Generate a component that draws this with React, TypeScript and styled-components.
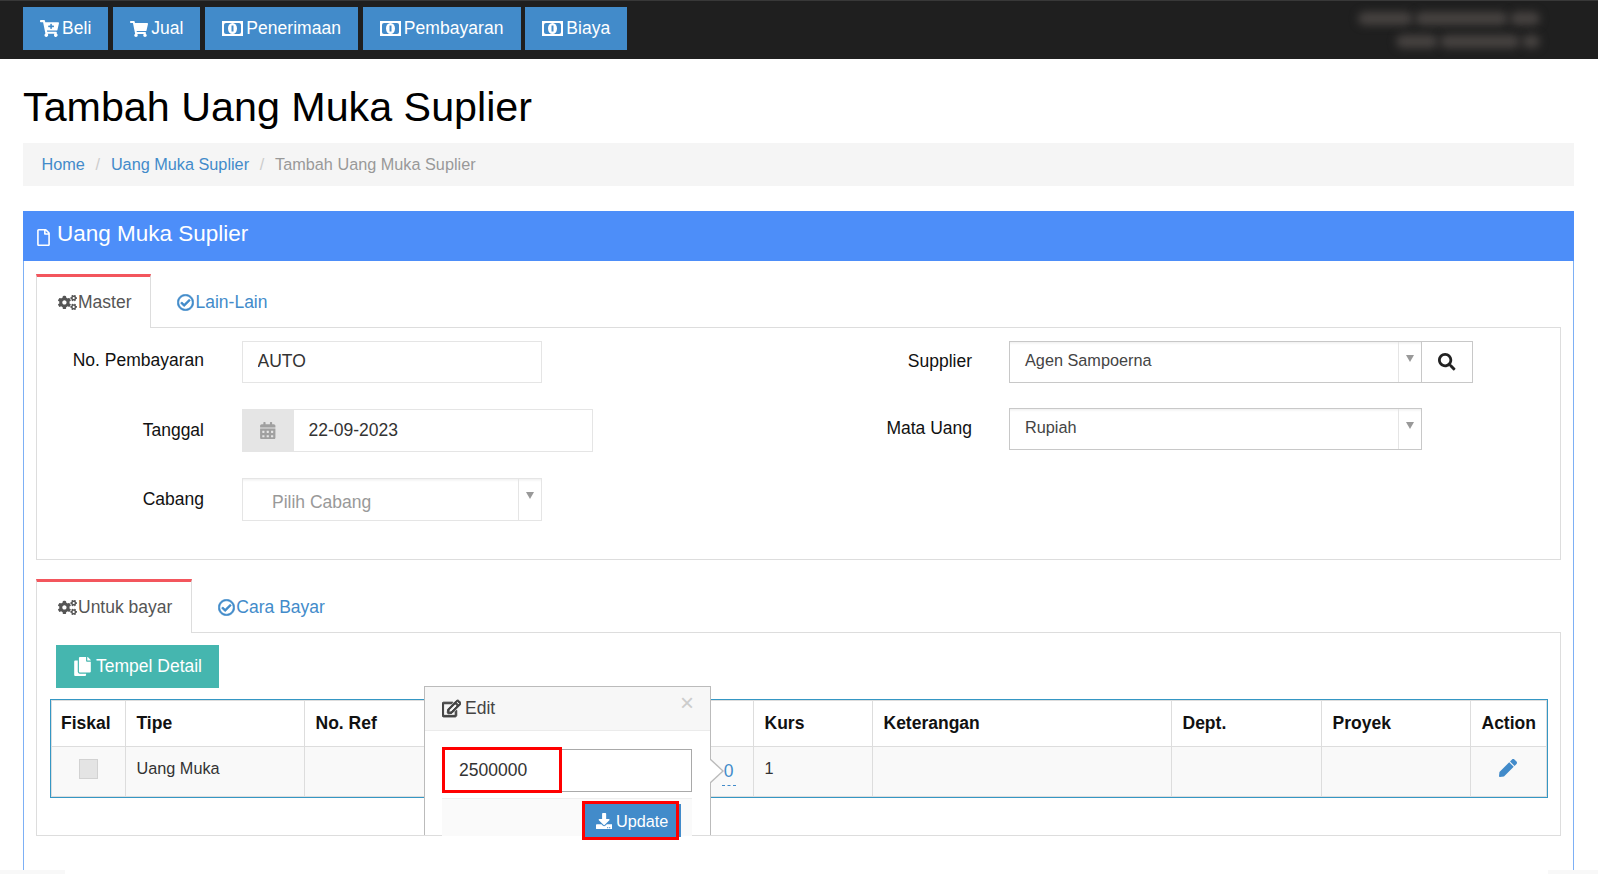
import React from 'react';
import styled, { createGlobalStyle } from 'styled-components';
import {
	FaCalendarAlt,
	FaCartPlus,
	FaCogs,
	FaCopy,
	FaDownload,
	FaPen,
	FaRegCheckCircle,
	FaRegEdit,
	FaRegFile,
	FaSearch,
	FaShoppingCart,
} from 'react-icons/fa';

const GlobalStyle = createGlobalStyle`
	html, body {
		margin: 0;
		height: 100%;
		overflow: hidden;
		background: #fff;
	}
	body {
		font-family: 'Liberation Sans', Arial, sans-serif;
		font-size: 17.5px;
		color: #333;
	}
	*, *::before, *::after {
		box-sizing: border-box;
	}
`;

const Topbar = styled.header`
	height: 59px;
	padding: 7px 58px 0 23px;
	background: #1f1f1f;
	border-top: 1px solid #383838;
	display: flex;
	justify-content: space-between;
`;

const NavGroup = styled.nav`
	display: flex;
	gap: 4.75px;
	margin-top: -1px;
`;

const NavButton = styled.button`
	height: 43px;
	padding: 0 17px;
	border: 0;
	background: #428bca;
	color: #fff;
	font: 17.5px 'Liberation Sans', Arial, sans-serif;
	letter-spacing: 0.05px;
	display: flex;
	align-items: center;
	gap: 3px;
	white-space: nowrap;
	svg {
		flex: none;
	}
`;

const UserBlur = styled.div`
	display: flex;
	flex-direction: column;
	align-items: flex-end;
	gap: 10px;
	padding-top: 4px;
`;

const BlurRow = styled.div`
	display: flex;
	gap: 2px;
`;

const BlurBit = styled.span<{ $w: number }>`
	display: block;
	width: ${(p) => p.$w}px;
	height: 13px;
	border-radius: 7px;
	background: #474341;
	filter: blur(4.5px);
`;

const Page = styled.main`
	padding: 0 24px 0 23px;
`;

const Title = styled.h1`
	margin: 0;
	height: 84px;
	line-height: 96px;
	font-size: 41.25px;
	font-weight: 400;
	color: #000;
`;

const Breadcrumb = styled.ol`
	margin: 0 0 25px;
	padding: 0 18.5px;
	height: 43px;
	list-style: none;
	background: #f5f5f5;
	display: flex;
	align-items: center;
	font-size: 16.25px;
	color: #999;
`;

const Crumb = styled.li`
	& + &::before {
		content: '/';
		padding: 0 10.75px;
		color: #ccc;
	}
	a {
		color: #428bca;
		text-decoration: none;
	}
`;

const Panel = styled.section`
	height: 659px;
	border: solid #7db0f5;
	border-width: 0 1px;
`;

const PanelHead = styled.h2`
	margin: 0 -1px;
	height: 50px;
	padding: 0 12px 4px;
	background: #4d8ef9;
	color: #fff;
	font-size: 22.5px;
	font-weight: 400;
	display: flex;
	align-items: center;
	gap: 5px;
	svg {
		font-size: 17px;
		margin-top: 7px;
	}
`;

const PanelBody = styled.div`
	padding: 13px 12px 0;
`;

const TabBar = styled.div`
	height: 54px;
	display: flex;
	border-bottom: 1px solid #ddd;
`;

const Tab = styled.div<{ $active?: boolean }>`
	height: ${(p) => (p.$active ? 54 : 53)}px;
	padding: ${(p) => (p.$active ? '0 19px 0 21px' : '0 21px 0 25px')};
	display: flex;
	align-items: center;
	gap: 1px;
	white-space: nowrap;
	color: ${(p) => (p.$active ? '#555' : '#428bca')};
	background: #fff;
	border-top: 3px solid ${(p) => (p.$active ? '#f3565d' : 'transparent')};
	border-left: 1px solid ${(p) => (p.$active ? '#ddd' : 'transparent')};
	border-right: 1px solid ${(p) => (p.$active ? '#ddd' : 'transparent')};
	svg {
		font-size: ${(p) => (p.$active ? 19 : 17)}px;
		stroke: currentColor;
		stroke-width: ${(p) => (p.$active ? 0 : 18)}px;
	}
`;

const TabBody = styled.div<{ $h: number }>`
	position: relative;
	display: flow-root;
	height: ${(p) => p.$h}px;
	border: 1px solid #ddd;
	border-top: 0;
`;

const FormGrid = styled.div`
	display: grid;
	grid-template-columns: 762px 1fr;
	padding-top: 13px;
`;

const FormColumn = styled.div`
	display: flex;
	flex-direction: column;
`;

const Field = styled.div<{ $labelWidth: number; $gap: number; $after: number; $lift?: number }>`
	display: flex;
	align-items: center;
	margin-bottom: ${(p) => p.$after}px;
	label {
		width: ${(p) => p.$labelWidth}px;
		margin-right: ${(p) => p.$gap}px;
		margin-bottom: ${(p) => p.$lift ?? 0}px;
		flex: none;
		text-align: right;
		color: #111;
	}
`;

const TextInput = styled.input<{ $w: number; $lift?: boolean }>`
	width: ${(p) => p.$w}px;
	height: ${(p) => (p.$lift ? 42 : 43)}px;
	padding: 0 14.5px ${(p) => (p.$lift ? 1 : 0)}px;
	border: 1px solid #e5e5e5;
	outline: 0;
	color: #333;
	background: #fff;
	font: 17.5px 'Liberation Sans', Arial, sans-serif;
`;

const InputGroup = styled.div`
	display: flex;
`;

const Addon = styled.span`
	width: 51px;
	height: 43px;
	background: #e5e5e5;
	color: #a0a0a0;
	display: flex;
	align-items: center;
	justify-content: center;
`;

const SelectBox = styled.div<{ $w: number; $muted?: boolean }>`
	width: ${(p) => p.$w}px;
	height: ${(p) => (p.$muted ? 43 : 42)}px;
	display: flex;
	border: 1px solid ${(p) => (p.$muted ? '#e5e5e5' : '#c8c8c8')};
	box-shadow: inset 0 3px 3px -2px rgba(0, 0, 0, 0.08);
`;

const SelectText = styled.span<{ $muted?: boolean }>`
	flex: 1;
	padding-left: ${(p) => (p.$muted ? 29 : 15)}px;
	padding-top: ${(p) => (p.$muted ? 6 : 0)}px;
	padding-bottom: ${(p) => (p.$muted ? 0 : 4)}px;
	display: flex;
	align-items: center;
	font-size: ${(p) => (p.$muted ? 17.5 : 16.25)}px;
	color: ${(p) => (p.$muted ? '#999' : '#444')};
`;

const Caret = styled.span`
	width: 23px;
	border-left: 1px solid #e5e5e5;
	display: flex;
	justify-content: center;
	padding-top: 13px;
	&::before {
		content: '';
		width: 8px;
		height: 7px;
		border: solid transparent;
		border-width: 7px 4px 0;
		border-top-color: #999;
	}
`;

const SearchButton = styled.span`
	width: 51px;
	height: 42px;
	border: 1px solid #c8c8c8;
	border-left: 0;
	display: flex;
	align-items: center;
	justify-content: center;
	color: #222;
`;

const SecondTabs = styled.div`
	margin-top: 19px;
`;

const PasteButton = styled.button`
	margin: 12px 0 0 19px;
	height: 43px;
	width: 163px;
	border: 0;
	background: #45b6af;
	color: #fff;
	font: 17.5px 'Liberation Sans', Arial, sans-serif;
	display: flex;
	align-items: center;
	justify-content: center;
	gap: 4px;
	svg {
		font-size: 19px;
	}
`;

const DetailTable = styled.table`
	margin: 12px 0 0 13.5px;
	width: 1495px;
	height: 97px;
	table-layout: fixed;
	border-collapse: collapse;
	outline: 1.5px solid #3597c4;
	outline-offset: -0.5px;
	th,
	td {
		border: 1px solid #ddd;
		padding: 0 10px 0 11px;
		text-align: left;
	}
	th:first-child {
		padding-left: 9.5px;
	}
	th {
		height: 46px;
		font-size: 17.5px;
		color: #111;
	}
	td {
		background: #f9f9f9;
		font-size: 16.25px;
		padding-bottom: 6px;
	}
`;

const CheckCell = styled.span`
	display: block;
	width: 19px;
	height: 20px;
	margin: 0 auto;
	background: #e4e4e4;
	border: 1px solid #d2d2d2;
`;

const AmountCell = styled.td`
	&& {
		text-align: right;
		padding: 0 17px 0 0;
		font-size: 17.5px;
		color: #428bca;
	}
	span {
		border-bottom: 1px dashed #428bca;
		padding: 0 2px 4px;
	}
`;

const EditCell = styled.td`
	&& {
		text-align: center;
		color: #428bca;
		font-size: 18px;
		padding: 0 10px 2px;
	}
`;

const Popover = styled.div`
	position: absolute;
	left: 387px;
	top: 53px;
	width: 287px;
	height: 149px;
	background: #fff;
	border: solid #bbb;
	border-width: 1px 1px 0;
	&::before {
		content: '';
		position: absolute;
		inset: -1px;
		z-index: -1;
		box-shadow: 0 3px 12px rgba(0, 0, 0, 0.25);
		clip-path: inset(-14px -14px 1px -14px);
	}
`;

const PopArrow = styled.span`
	position: absolute;
	left: 100%;
	top: 71px;
	width: 14px;
	height: 26px;
	border: solid transparent;
	border-width: 13px 0 13px 14px;
	border-left-color: #bbb;
	&::after {
		content: '';
		position: absolute;
		left: -15px;
		top: -12px;
		width: 13px;
		height: 24px;
		border: solid transparent;
		border-width: 12px 0 12px 13px;
		border-left-color: #fff;
	}
`;

const PopHead = styled.div`
	height: 44px;
	padding: 0 17px;
	background: #f7f7f7;
	border-bottom: 1px solid #ebebeb;
	display: flex;
	align-items: center;
	gap: 4px;
	color: #444;
	svg {
		font-size: 19px;
		stroke: currentColor;
		stroke-width: 30px;
	}
`;

const PopClose = styled.span`
	position: absolute;
	right: 16px;
	top: 2px;
	font-size: 24px;
	color: #ccc;
`;

const PopBody = styled.div`
	padding: 18px 18px 0 17px;
`;

const AmountField = styled.div`
	position: relative;
	height: 43px;
	&::after {
		content: '';
		position: absolute;
		left: 0;
		top: -2px;
		width: 120px;
		height: 46px;
		border: 3px solid #f00;
		pointer-events: none;
	}
`;

const AmountInput = styled.input`
	width: 100%;
	height: 100%;
	padding: 0 16px;
	border: 1px solid #a9a9a9;
	outline: 0;
	color: #333;
	font: 17.5px 'Liberation Sans', Arial, sans-serif;
`;

const PopFooter = styled.div`
	margin-top: 6px;
	height: 38px;
	padding: 5px 11px 0 0;
	background: #fafafa;
	border-top: 1px solid #eee;
	display: flex;
	justify-content: flex-end;
`;

const UpdateButton = styled.button`
	position: relative;
	width: 96px;
	height: 33px;
	padding: 1px 2px 0 0;
	border: 0;
	background: #428bca;
	color: #fff;
	font: 16.25px 'Liberation Sans', Arial, sans-serif;
	display: flex;
	align-items: center;
	justify-content: center;
	gap: 4px;
	&::after {
		content: '';
		position: absolute;
		left: -3px;
		right: 2px;
		top: -3px;
		bottom: -3px;
		border: 3px solid #f00;
	}
`;

const BottomFade = styled.div`
	height: 4px;
	margin: 0 -24px 0 -23px;
	display: flex;
	justify-content: space-between;
	span {
		display: block;
		height: 100%;
		background: #f8f8f8;
	}
	span:first-child {
		width: 65px;
	}
	span:last-child {
		width: 50px;
	}
`;

// fa-money lama, versi react-icons terlalu tipis
const MoneyIcon = () => (
	<svg width="21" height="15" viewBox="0 0 21 15">
		<rect width="21" height="15" fill="#fff" />
		<rect x="2" y="2" width="17" height="11" rx="2" fill="#428bca" />
		<ellipse cx="10.5" cy="7.5" rx="4.5" ry="5.5" fill="#fff" />
		<rect x="9.5" y="4.5" width="2" height="6" fill="#428bca" />
	</svg>
);

const navItems = [
	{ label: 'Beli', icon: <FaCartPlus size={19} /> },
	{ label: 'Jual', icon: <FaShoppingCart size={18} /> },
	{ label: 'Penerimaan', icon: <MoneyIcon /> },
	{ label: 'Pembayaran', icon: <MoneyIcon /> },
	{ label: 'Biaya', icon: <MoneyIcon /> },
];

const App = () => {
	return (
		<>
			<GlobalStyle />
			<Topbar>
				<NavGroup>
					{navItems.map((item) => (
						<NavButton key={item.label}>
							{item.icon}
							{item.label}
						</NavButton>
					))}
				</NavGroup>
				<UserBlur>
					<BlurRow>
						<BlurBit $w={55} />
						<BlurBit $w={93} />
						<BlurBit $w={30} />
					</BlurRow>
					<BlurRow>
						<BlurBit $w={42} />
						<BlurBit $w={80} />
						<BlurBit $w={18} />
					</BlurRow>
				</UserBlur>
			</Topbar>
			<Page>
				<Title>Tambah Uang Muka Suplier</Title>
				<Breadcrumb>
					<Crumb>
						<a href="#home">Home</a>
					</Crumb>
					<Crumb>
						<a href="#uang-muka">Uang Muka Suplier</a>
					</Crumb>
					<Crumb>Tambah Uang Muka Suplier</Crumb>
				</Breadcrumb>
				<Panel>
					<PanelHead>
						<FaRegFile />
						Uang Muka Suplier
					</PanelHead>
					<PanelBody>
						<TabBar>
							<Tab $active>
								<FaCogs />
								Master
							</Tab>
							<Tab>
								<FaRegCheckCircle />
								Lain-Lain
							</Tab>
						</TabBar>
						<TabBody $h={232}>
							<FormGrid>
								<FormColumn>
									<Field $labelWidth={167} $gap={38} $after={26} $lift={3}>
										<label>No. Pembayaran</label>
										<TextInput $w={300} $lift value="AUTO" readOnly />
									</Field>
									<Field $labelWidth={167} $gap={38} $after={26}>
										<label>Tanggal</label>
										<InputGroup>
											<Addon>
												<FaCalendarAlt />
											</Addon>
											<TextInput $w={300} value="22-09-2023" readOnly />
										</InputGroup>
									</Field>
									<Field $labelWidth={167} $gap={38} $after={0}>
										<label>Cabang</label>
										<SelectBox $w={300} $muted>
											<SelectText $muted>Pilih Cabang</SelectText>
											<Caret />
										</SelectBox>
									</Field>
								</FormColumn>
								<FormColumn>
									<Field $labelWidth={173} $gap={37} $after={25} $lift={2}>
										<label>Supplier</label>
										<SelectBox $w={413}>
											<SelectText>Agen Sampoerna</SelectText>
											<Caret />
										</SelectBox>
										<SearchButton>
											<FaSearch />
										</SearchButton>
									</Field>
									<Field $labelWidth={173} $gap={37} $after={0} $lift={2}>
										<label>Mata Uang</label>
										<SelectBox $w={413}>
											<SelectText>Rupiah</SelectText>
											<Caret />
										</SelectBox>
									</Field>
								</FormColumn>
							</FormGrid>
						</TabBody>
						<SecondTabs>
							<TabBar>
								<Tab $active>
									<FaCogs />
									Untuk bayar
								</Tab>
								<Tab>
									<FaRegCheckCircle />
									Cara Bayar
								</Tab>
							</TabBar>
							<TabBody $h={203}>
								<PasteButton>
									<FaCopy />
									Tempel Detail
								</PasteButton>
								<DetailTable>
									<colgroup>
										<col width={74} />
										<col width={179} />
										<col width={296} />
										<col width={153} />
										<col width={119} />
										<col width={299} />
										<col width={150} />
										<col width={149} />
										<col width={76} />
									</colgroup>
									<thead>
										<tr>
											<th>Fiskal</th>
											<th>Tipe</th>
											<th>No. Ref</th>
											<th />
											<th>Kurs</th>
											<th>Keterangan</th>
											<th>Dept.</th>
											<th>Proyek</th>
											<th>Action</th>
										</tr>
									</thead>
									<tbody>
										<tr>
											<td>
												<CheckCell />
											</td>
											<td>Uang Muka</td>
											<td />
											<AmountCell>
												<span>0</span>
											</AmountCell>
											<td>1</td>
											<td />
											<td />
											<td />
											<EditCell>
												<FaPen />
											</EditCell>
										</tr>
									</tbody>
								</DetailTable>
								<Popover>
									<PopArrow />
									<PopHead>
										<FaRegEdit />
										Edit
									</PopHead>
									<PopClose>×</PopClose>
									<PopBody>
										<AmountField>
											<AmountInput value="2500000" readOnly />
										</AmountField>
										<PopFooter>
											<UpdateButton>
												<FaDownload />
												Update
											</UpdateButton>
										</PopFooter>
									</PopBody>
								</Popover>
							</TabBody>
						</SecondTabs>
					</PanelBody>
				</Panel>
				<BottomFade>
					<span />
					<span />
				</BottomFade>
			</Page>
		</>
	);
};

export default App;
